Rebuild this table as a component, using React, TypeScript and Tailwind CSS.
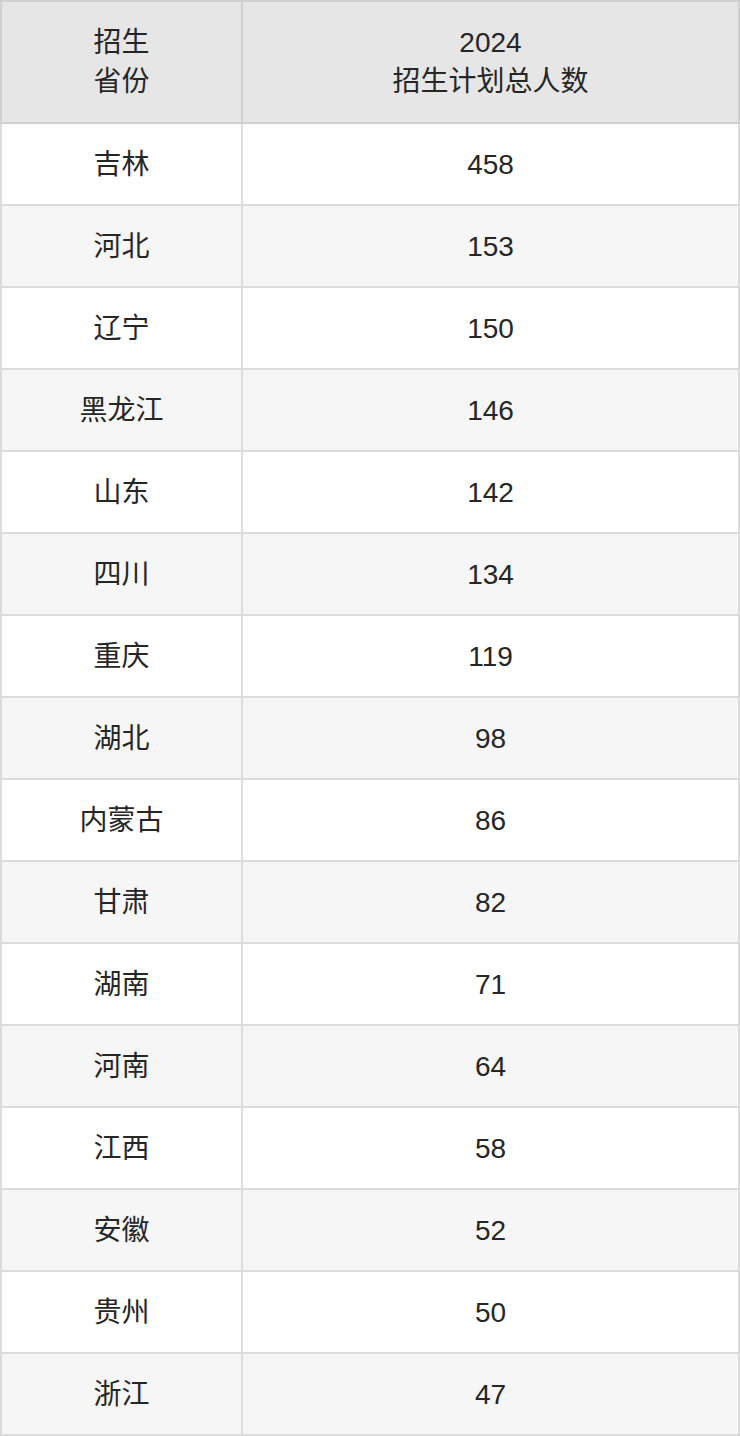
import React from "react";

const rows: [string, number][] = [
  ["吉林", 458],
  ["河北", 153],
  ["辽宁", 150],
  ["黑龙江", 146],
  ["山东", 142],
  ["四川", 134],
  ["重庆", 119],
  ["湖北", 98],
  ["内蒙古", 86],
  ["甘肃", 82],
  ["湖南", 71],
  ["河南", 64],
  ["江西", 58],
  ["安徽", 52],
  ["贵州", 50],
  ["浙江", 47],
];

const App = () => {
  return (
    <div
      className="w-[740px] bg-white text-[#262626] text-[28px] leading-[39px]"
      style={{ fontFamily: '"Liberation Sans", "Noto Sans CJK SC", sans-serif' }}
    >
      <table className="w-full border-collapse border-2 border-[#d4d4d4] text-center">
        <thead>
          <tr className="bg-[#e6e6e6] h-[122px]">
            <th className="w-[241px] border-2 border-[#d0d0d0] font-normal">
              招生
              <br />
              省份
            </th>
            <th className="border-2 border-[#d0d0d0] font-normal">
              2024
              <br />
              招生计划总人数
            </th>
          </tr>
        </thead>
        <tbody>
          {rows.map(([name, num], i) => (
            <tr key={name} className={`h-[82px] ${i % 2 === 1 ? "bg-[#f6f6f6]" : "bg-white"}`}>
              <td className="border-2 border-[#dcdcdc]">{name}</td>
              <td className="border-2 border-[#dcdcdc]">{num}</td>
            </tr>
          ))}
        </tbody>
      </table>
    </div>
  );
};

export default App;
